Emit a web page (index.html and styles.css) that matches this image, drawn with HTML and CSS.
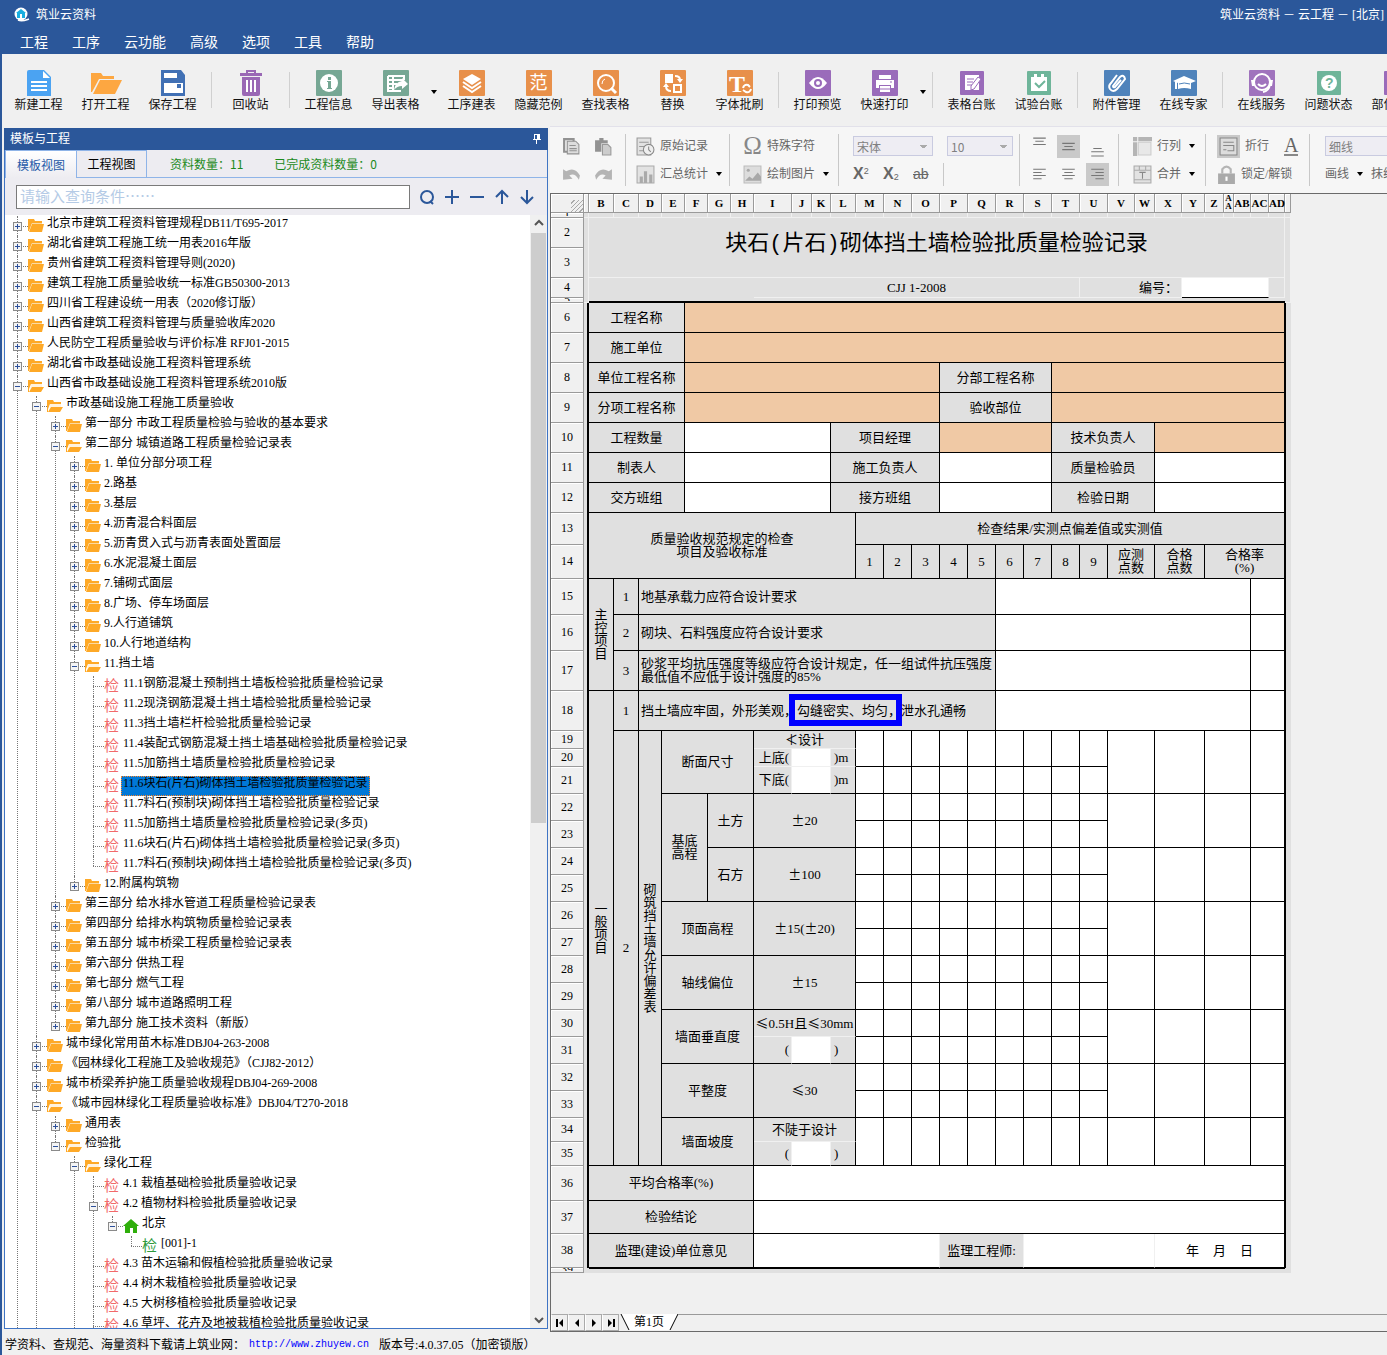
FILE: index.html
```html
<!DOCTYPE html>
<html lang="zh-CN">
<head>
    <meta charset="UTF-8">
    <meta name="viewport" content="width=device-width, initial-scale=1.0">
    <title>筑业云资料</title>
    <link rel="stylesheet" href="styles.css">
</head>
<body>
    <!-- Shared icons -->
    <svg class="defs">
        <symbol id="folder" viewBox="0 0 16 14">
            <path fill="#fea927" d="M0 0h6l1 2h7v2H4L1 12H0z"/>
            <path fill="#fcd9a0" d="M4 4h10v1H4z"/>
            <path fill="#fea927" d="M4 5h12l-2 8H1z"/>
        </symbol>
        <symbol id="folder-open" viewBox="0 0 16 14">
            <path fill="#fea927" d="M0 1h6l1 2h7v2H3L1 10v3H0z"/>
            <path fill="#fff3df" d="M3 5h11v3H4l-2 4z"/>
            <path fill="#fea927" d="M4 8h12l-3 5H1z"/>
        </symbol>
        <symbol id="home" viewBox="0 0 16 14">
            <path fill="#2fae0b" d="M8 0l8 7h-2v7h-4V9H7v5H2V7H0z"/>
        </symbol>
    </svg>

    <header class="titlebar">
        <div class="caption">
            <svg width="16" height="16" viewBox="0 0 16 16"><circle cx="7" cy="7" r="6.500" fill="#fff"/><path fill="#19aee0" d="M7 2l5 4h-1v5H3V6H2z"/><path fill="#fff" d="M6 7h2v4H6z"/><path fill="none" stroke="#fff" stroke-width="1.500" d="M4 13c4 2 8 0 11-1"/></svg>
            <span>筑业云资料</span>
            <span class="doc-title">筑业云资料 － 云工程 － [北京]</span>
        </div>
        <nav class="menu">
            <a href="#">工程</a>
            <a href="#">工序</a>
            <a href="#">云功能</a>
            <a href="#">高级</a>
            <a href="#">选项</a>
            <a href="#">工具</a>
            <a href="#">帮助</a>
        </nav>
    </header>

    <!-- Main toolbar -->
    <div class="toolbar">
        <button class="tool"><svg viewBox="0 0 26 26"><path fill="#4ba3f2" d="M3 0h15l7 7v19H1V2q0-2 2-2z"/><path fill="#fff" d="M17 1l7 7h-7z"/><path stroke="#fff" stroke-width="2" d="M5 12h16M5 16h16M5 20h16"/></svg>新建工程</button>
        <button class="tool"><svg class="wide" viewBox="0 0 32 26"><path fill="#fda741" d="M1 3h10l2 3h11v3H9L2 22H1z"/><path fill="#fda741" d="M10 10h22l-7 14H3z"/></svg>打开工程</button>
        <button class="tool"><svg viewBox="0 0 26 26"><path fill="#4170b4" d="M1 0h20l4 5v21H1z"/><path fill="#fff" d="M4 3h13v5H4zM4 13h19v10H4z"/><path fill="#4170b4" d="M17 14h4v4h-4z"/></svg>保存工程</button>
        <span class="split"></span>
        <button class="tool"><svg viewBox="0 0 26 26"><path fill="none" stroke="#9a68b5" stroke-width="2" d="M9 4V1h8v3"/><path fill="#9a68b5" d="M2 3h22v3H2zM4 7h18v17q0 2-2 2H6q-2 0-2-2z"/><path stroke="#fff" stroke-width="2" d="M9 10v12M13 10v12M17 10v12"/></svg>回收站</button>
        <span class="split"></span>
        <button class="tool"><svg viewBox="0 0 26 26"><rect width="26" height="26" rx="1" fill="#76a794"/><circle cx="13" cy="13" r="9" fill="#fff"/><path fill="#76a794" d="M12 7h3v3h-3zM11 11h4v7h1v1h-5v-1h1v-6h-1z"/></svg>工程信息</button>
        <button class="tool"><svg viewBox="0 0 26 26"><rect width="26" height="26" rx="1" fill="#76a794"/><path fill="none" stroke="#fff" stroke-width="2" d="M5 6h16v4M5 6v15h13M5 10h15M5 14h9M5 18h6M10 6v14"/><path fill="#fff" d="M19 8l6 6-6 5v-3q-5 0-8 4 1-8 8-9z"/></svg>导出表格</button>
        <button class="drop" aria-label="导出选项"></button>
        <button class="tool"><svg viewBox="0 0 26 26"><rect width="26" height="26" rx="1" fill="#e8904a"/><path fill="#fff" d="M13 4l9 5-9 6-9-6z"/><path fill="none" stroke="#fff" stroke-width="2" d="M4 12l9 6 9-6M4 16l9 6 9-6"/></svg>工序建表</button>
        <button class="tool"><span class="glyph">范</span>隐藏范例</button>
        <button class="tool"><svg viewBox="0 0 26 26"><rect width="26" height="26" rx="1" fill="#e8904a"/><circle cx="13" cy="13" r="8" fill="none" stroke="#fff" stroke-width="2"/><path fill="none" stroke="#fff" stroke-width="3" d="M18 18l5 5"/><path fill="none" stroke="#fff" d="M9 14q0-4 3-5"/></svg>查找表格</button>
        <button class="tool"><svg viewBox="0 0 26 26"><rect width="26" height="26" rx="1" fill="#e8904a"/><path fill="#fff" d="M5 4h8v9H5z"/><path fill="none" stroke="#fff" stroke-width="2" d="M14 15h7v7h-7zM15 6q5 0 5 4M6 16q0 5 5 5"/><path fill="#fff" d="M17 9h6l-3 4zM3 17l3-4 3 4z"/></svg>替换</button>
        <button class="tool"><svg viewBox="0 0 26 26"><rect width="26" height="26" rx="1" fill="#e8904a"/><text x="2" y="22" font-size="24" font-weight="bold" font-family="Liberation Serif" fill="#fff">T</text><path fill="none" stroke="#fff" stroke-width="2" d="M16 18q1-4 5-3l2 2M24 19q-1 4-5 3l-3-2"/></svg>字体批刷</button>
        <span class="split"></span>
        <button class="tool"><svg viewBox="0 0 26 26"><rect width="26" height="26" rx="1" fill="#9a6bba"/><path fill="#fff" d="M4 13q9-12 18 0-9 12-18 0z"/><circle cx="13" cy="13" r="3" fill="#fff" stroke="#9a6bba" stroke-width="2"/></svg>打印预览</button>
        <button class="tool"><svg viewBox="0 0 26 26"><rect width="26" height="26" rx="1" fill="#9a6bba"/><path fill="#fff" d="M7 5h12v4H7zM4 10h18v8h-3v-3H7v3H4zM8 16h10v6H8z"/><path stroke="#9a6bba" d="M8 19h10M18 12h2"/></svg>快速打印</button>
        <button class="drop" aria-label="打印选项"></button>
        <span class="split"></span>
        <button class="tool"><svg viewBox="0 0 26 26"><rect x="1" y="1" width="24" height="24" rx="1" fill="#9a6bba"/><path fill="#fff" d="M6 5h14v15H6z"/><path stroke="#9a6bba" d="M8 9h7M8 12h6M8 15h5"/><path fill="#fff" stroke="#9a6bba" d="M19 7l3 2-7 10-3 1v-4z"/></svg>表格台账</button>
        <button class="tool"><svg viewBox="0 0 26 26"><rect x="1" y="1" width="24" height="24" rx="1" fill="#6fb59a"/><path fill="#fff" d="M5 7h16v14H5zM8 4h3v5H8zM15 4h3v5h-3z"/><path fill="none" stroke="#6fb59a" stroke-width="2" d="M9 13l4 4 6-6"/></svg>试验台账</button>
        <span class="split"></span>
        <button class="tool"><svg viewBox="0 0 26 26"><rect width="26" height="26" rx="1" fill="#4f83bb"/><path fill="none" stroke="#fff" stroke-width="2" d="M17 10l-6 7q-2 1-2-1l7-9q4-3 5 2l-8 10q-4 4-7 0-2-3 1-6l6-8"/></svg>附件管理</button>
        <button class="tool"><svg viewBox="0 0 26 26"><rect width="26" height="26" rx="1" fill="#4f83bb"/><path fill="#fff" d="M13 6l12 5-5 2v6q-7-2-13 0v-6l-5-2z"/><path fill="none" stroke="#4f83bb" d="M8 14q5-2 11 0"/><path stroke="#fff" stroke-width="2" d="M5 12v7"/></svg>在线专家</button>
        <span class="split"></span>
        <button class="tool"><svg viewBox="0 0 26 26"><rect width="26" height="26" rx="1" fill="#a073bd"/><circle cx="13" cy="12" r="8" fill="none" stroke="#fff" stroke-width="2"/><path fill="none" stroke="#fff" stroke-width="2" d="M9 14q4 4 8 0M21 14q-1 7-7 8"/><path fill="#fff" d="M2 10h3v6H3zM21 10h3l-1 6h-2z"/></svg>在线服务</button>
        <button class="tool"><svg viewBox="0 0 26 26"><rect x="1" y="1" width="24" height="24" rx="1" fill="#6fb59a"/><circle cx="13" cy="13" r="8" fill="#fff"/><text x="9" y="18" font-size="14" font-weight="bold" font-family="Liberation Sans" fill="#6fb59a">?</text></svg>问题状态</button>
        <button class="tool"><svg viewBox="0 0 26 26"><rect x="1" y="1" width="24" height="24" rx="1" fill="#9a6bba"/><path fill="#fff" d="M5 5h14v15H5z"/></svg>部位管理</button>
    </div>

    <main class="workspace">
        <!-- Left: template tree -->
        <aside class="panel">
            <div class="panel-head">模板与工程
                <svg width="9" height="10" viewBox="0 0 9 10"><path fill="#fff" d="M2 0h6v5h1v1H5v4H4V6H1V5h1z"/><path fill="#2b579a" d="M3 1h2v4H3z"/></svg>
            </div>
            <div class="tabs">
                <button class="tab active">模板视图</button>
                <button class="tab">工程视图</button>
                <div class="counts"><span>资料数量：11</span><span>已完成资料数量：0</span></div>
            </div>
            <div class="search">
                <input type="text" aria-label="查询条件" placeholder="请输入查询条件……">
                <button aria-label="查找"><svg viewBox="0 0 16 16"><circle cx="8" cy="8" r="6"/><path d="M11 12l3 3"/></svg></button>
                <button aria-label="展开"><svg viewBox="0 0 16 16"><path d="M8 1v14M1 8h14"/></svg></button>
                <button aria-label="折叠"><svg viewBox="0 0 16 16"><path d="M1 8h14"/></svg></button>
                <button aria-label="上一个"><svg viewBox="0 0 16 16"><path d="M8 2v13M2 8l6-6 6 6"/></svg></button>
                <button aria-label="下一个"><svg viewBox="0 0 16 16"><path d="M8 1v13M2 8l6 6 6-6"/></svg></button>
            </div>
            <div class="tree-box">
                <ul class="tree more">
                    <li><div class="row"><button class="toggle"></button><svg><use href="#folder"/></svg><span>北京市建筑工程资料管理规程DB11/T695-2017</span></div></li>
                    <li><div class="row"><button class="toggle"></button><svg><use href="#folder"/></svg><span>湖北省建筑工程施工统一用表2016年版</span></div></li>
                    <li><div class="row"><button class="toggle"></button><svg><use href="#folder"/></svg><span>贵州省建筑工程资料管理导则(2020)</span></div></li>
                    <li><div class="row"><button class="toggle"></button><svg><use href="#folder"/></svg><span>建筑工程施工质量验收统一标准GB50300-2013</span></div></li>
                    <li><div class="row"><button class="toggle"></button><svg><use href="#folder"/></svg><span>四川省工程建设统一用表（2020修订版）</span></div></li>
                    <li><div class="row"><button class="toggle"></button><svg><use href="#folder"/></svg><span>山西省建筑工程资料管理与质量验收库2020</span></div></li>
                    <li><div class="row"><button class="toggle"></button><svg><use href="#folder"/></svg><span>人民防空工程质量验收与评价标准 RFJ01-2015</span></div></li>
                    <li><div class="row"><button class="toggle"></button><svg><use href="#folder"/></svg><span>湖北省市政基础设施工程资料管理系统</span></div></li>
                    <li><div class="row"><button class="toggle open"></button><svg><use href="#folder-open"/></svg><span>山西省市政基础设施工程资料管理系统2010版</span></div>
                        <ul class="more">
                            <li><div class="row"><button class="toggle open"></button><svg><use href="#folder-open"/></svg><span>市政基础设施工程施工质量验收</span></div>
                                <ul>
                                    <li><div class="row"><button class="toggle"></button><svg><use href="#folder"/></svg><span>第一部分 市政工程质量检验与验收的基本要求</span></div></li>
                                    <li><div class="row"><button class="toggle open"></button><svg><use href="#folder-open"/></svg><span>第二部分 城镇道路工程质量检验记录表</span></div>
                                        <ul>
                                            <li><div class="row"><button class="toggle"></button><svg><use href="#folder"/></svg><span>1. 单位分部分项工程</span></div></li>
                                            <li><div class="row"><button class="toggle"></button><svg><use href="#folder"/></svg><span>2.路基</span></div></li>
                                            <li><div class="row"><button class="toggle"></button><svg><use href="#folder"/></svg><span>3.基层</span></div></li>
                                            <li><div class="row"><button class="toggle"></button><svg><use href="#folder"/></svg><span>4.沥青混合料面层</span></div></li>
                                            <li><div class="row"><button class="toggle"></button><svg><use href="#folder"/></svg><span>5.沥青贯入式与沥青表面处置面层</span></div></li>
                                            <li><div class="row"><button class="toggle"></button><svg><use href="#folder"/></svg><span>6.水泥混凝土面层</span></div></li>
                                            <li><div class="row"><button class="toggle"></button><svg><use href="#folder"/></svg><span>7.铺砌式面层</span></div></li>
                                            <li><div class="row"><button class="toggle"></button><svg><use href="#folder"/></svg><span>8.广场、停车场面层</span></div></li>
                                            <li><div class="row"><button class="toggle"></button><svg><use href="#folder"/></svg><span>9.人行道铺筑</span></div></li>
                                            <li><div class="row"><button class="toggle"></button><svg><use href="#folder"/></svg><span>10.人行地道结构</span></div></li>
                                            <li><div class="row"><button class="toggle open"></button><svg><use href="#folder-open"/></svg><span>11.挡土墙</span></div>
                                                <ul>
                                                    <li><div class="row leaf"><i>检</i><span>11.1钢筋混凝土预制挡土墙板检验批质量检验记录</span></div></li>
                                                    <li><div class="row leaf"><i>检</i><span>11.2现浇钢筋混凝土挡土墙检验批质量检验记录</span></div></li>
                                                    <li><div class="row leaf"><i>检</i><span>11.3挡土墙栏杆检验批质量检验记录</span></div></li>
                                                    <li><div class="row leaf"><i>检</i><span>11.4装配式钢筋混凝土挡土墙基础检验批质量检验记录</span></div></li>
                                                    <li><div class="row leaf"><i>检</i><span>11.5加筋挡土墙质量检验批质量检验记录</span></div></li>
                                                    <li><div class="row leaf"><i>检</i><span class="selected">11.6块石(片石)砌体挡土墙检验批质量检验记录</span></div></li>
                                                    <li><div class="row leaf"><i>检</i><span>11.7料石(预制块)砌体挡土墙检验批质量检验记录</span></div></li>
                                                    <li><div class="row leaf"><i>检</i><span>11.5加筋挡土墙质量检验批质量检验记录(多页)</span></div></li>
                                                    <li><div class="row leaf"><i>检</i><span>11.6块石(片石)砌体挡土墙检验批质量检验记录(多页)</span></div></li>
                                                    <li><div class="row leaf"><i>检</i><span>11.7料石(预制块)砌体挡土墙检验批质量检验记录(多页)</span></div></li>
                                                </ul>
                                            </li>
                                            <li><div class="row"><button class="toggle"></button><svg><use href="#folder"/></svg><span>12.附属构筑物</span></div></li>
                                        </ul>
                                    </li>
                                    <li><div class="row"><button class="toggle"></button><svg><use href="#folder"/></svg><span>第三部分 给水排水管道工程质量检验记录表</span></div></li>
                                    <li><div class="row"><button class="toggle"></button><svg><use href="#folder"/></svg><span>第四部分 给排水构筑物质量检验记录表</span></div></li>
                                    <li><div class="row"><button class="toggle"></button><svg><use href="#folder"/></svg><span>第五部分 城市桥梁工程质量检验记录表</span></div></li>
                                    <li><div class="row"><button class="toggle"></button><svg><use href="#folder"/></svg><span>第六部分 供热工程</span></div></li>
                                    <li><div class="row"><button class="toggle"></button><svg><use href="#folder"/></svg><span>第七部分 燃气工程</span></div></li>
                                    <li><div class="row"><button class="toggle"></button><svg><use href="#folder"/></svg><span>第八部分 城市道路照明工程</span></div></li>
                                    <li><div class="row"><button class="toggle"></button><svg><use href="#folder"/></svg><span>第九部分 施工技术资料（新版）</span></div></li>
                                </ul>
                            </li>
                            <li><div class="row"><button class="toggle"></button><svg><use href="#folder"/></svg><span>城市绿化常用苗木标准DBJ04-263-2008</span></div></li>
                            <li><div class="row"><button class="toggle"></button><svg><use href="#folder"/></svg><span>《园林绿化工程施工及验收规范》（CJJ82-2012）</span></div></li>
                            <li><div class="row"><button class="toggle"></button><svg><use href="#folder"/></svg><span>城市桥梁养护施工质量验收规程DBJ04-269-2008</span></div></li>
                            <li><div class="row"><button class="toggle open"></button><svg><use href="#folder-open"/></svg><span>《城市园林绿化工程质量验收标准》DBJ04/T270-2018</span></div>
                                <ul>
                                    <li><div class="row"><button class="toggle"></button><svg><use href="#folder"/></svg><span>通用表</span></div></li>
                                    <li><div class="row"><button class="toggle open"></button><svg><use href="#folder-open"/></svg><span>检验批</span></div>
                                        <ul class="more">
                                            <li><div class="row"><button class="toggle open"></button><svg><use href="#folder-open"/></svg><span>绿化工程</span></div>
                                                <ul class="more">
                                                    <li><div class="row leaf"><i>检</i><span>4.1 栽植基础检验批质量验收记录</span></div></li>
                                                    <li><div class="row"><button class="toggle open"></button><i>检</i><span>4.2 植物材料检验批质量验收记录</span></div>
                                                        <ul>
                                                            <li><div class="row"><button class="toggle open"></button><svg><use href="#home"/></svg><span>北京</span></div>
                                                                <ul>
                                                                    <li><div class="row leaf"><i class="done">检</i><span>[001]-1</span></div></li>
                                                                </ul>
                                                            </li>
                                                        </ul>
                                                    </li>
                                                    <li><div class="row leaf"><i>检</i><span>4.3 苗木运输和假植检验批质量验收记录</span></div></li>
                                                    <li><div class="row leaf"><i>检</i><span>4.4 树木栽植检验批质量验收记录</span></div></li>
                                                    <li><div class="row leaf"><i>检</i><span>4.5 大树移植检验批质量验收记录</span></div></li>
                                                    <li><div class="row leaf"><i>检</i><span>4.6 草坪、花卉及地被栽植检验批质量验收记录</span></div></li>
                                                </ul>
                                            </li>
                                        </ul>
                                    </li>
                                </ul>
                            </li>
                        </ul>
                    </li>
                </ul>
                <div class="scrollbar">
                    <svg viewBox="0 0 17 17"><path d="M5 10l4-4 4 4"/></svg>
                    <div class="thumb"></div>
                    <svg viewBox="0 0 17 17"><path d="M5 7l4 4 4-4"/></svg>
                </div>
            </div>
        </aside>

        <!-- Right: form editor -->
        <section class="editor">
            <div class="format-bar">
                <div class="group clip">
                    <div class="line"><button aria-label="复制"><svg viewBox="0 0 18 18"><path fill="#eee" stroke="#929292" stroke-width="2" d="M2 2h9v12H2z"/><path fill="#ddd" stroke="#929292" d="M5 4h8l3 3v9H5z"/><path stroke="#929292" d="M7 8h6M7 11h7M7 13h7"/></svg></button><button aria-label="粘贴"><svg viewBox="0 0 18 18"><path fill="#929292" d="M1 3h4V1h4v2h4v3H7v8H1z"/><path fill="#ccc" stroke="#999" d="M8 7h5l3 3v7H8z"/></svg></button></div>
                    <div class="line"><button aria-label="撤销"><svg viewBox="0 0 18 18"><path fill="#b4b4b4" d="M1 4l3 2q8-5 13 4l-1 4q-4-7-9-4l3 3-9 1z"/></svg></button><button aria-label="重做"><svg viewBox="0 0 18 18"><path fill="#b4b4b4" d="M17 4l-3 2q-8-5-13 4l1 4q4-7 9-4l-3 3 9 1z"/></svg></button></div>
                </div>
                <div class="group record">
                    <div class="line"><button><svg viewBox="0 0 18 18"><path fill="#e2e2e2" stroke="#999" d="M1 1h13v16H1z"/><path stroke="#999" d="M3 5h9M3 9h5M3 13h4"/><circle cx="12" cy="12" r="5" fill="#eee" stroke="#888"/><path fill="none" stroke="#888" d="M12 9v3l2 2"/></svg>原始记录</button></div>
                    <div class="line"><button><svg viewBox="0 0 18 18"><path fill="#e2e2e2" stroke="#aaa" d="M1 1h16v16H1z"/><path stroke="#aaa" stroke-width="3" d="M5 17v-6M9 17V6M14 17v-8"/></svg>汇总统计<b class="caret"></b></button></div>
                </div>
                <div class="group symbol">
                    <div class="line"><button><span class="omega">Ω</span>特殊字符</button></div>
                    <div class="line"><button><svg viewBox="0 0 18 18"><path fill="#ddd" stroke="#bbb" d="M1 1h16v16H1z"/><circle cx="5" cy="5" r="1.500" fill="#aaa"/><path fill="#a8a8a8" d="M2 15l4-4 3 2 5-6 3 4v4z"/></svg>绘制图片<b class="caret"></b></button></div>
                </div>
                <div class="group font">
                    <div class="line"><select class="face" aria-label="字体"><option>宋体</option></select><select class="size" aria-label="字号"><option>10</option></select></div>
                    <div class="line"><button class="script"><b>X</b><sup>2</sup></button><button class="script"><b>X</b><sub>2</sub></button><button class="strike">ab</button><span class="bar"></span></div>
                </div>
                <div class="group align">
                    <div class="line"><button aria-label="顶端"><svg viewBox="0 0 22 22"><path d="M5 3h12M7 6h8M5 9h12"/></svg></button><button class="on" aria-label="居中"><svg viewBox="0 0 22 22"><path d="M5 8h12M7 11h8M5 14h12"/></svg></button><button aria-label="底端"><svg viewBox="0 0 22 22"><path d="M7 13h8M5 16h12M5 20h12"/></svg></button></div>
                    <div class="line"><button aria-label="左对齐"><svg viewBox="0 0 22 22"><path d="M5 6h12M5 9h8M5 12h12M5 15h8"/></svg></button><button aria-label="水平居中"><svg viewBox="0 0 22 22"><path d="M5 6h12M7 9h8M5 12h12M7 15h8"/></svg></button><button class="on" aria-label="右对齐"><svg viewBox="0 0 22 22"><path d="M5 6h12M9 9h8M5 12h12M9 15h8"/></svg></button></div>
                </div>
                <div class="group cells">
                    <div class="line"><button><svg viewBox="0 0 18 18"><path fill="#b5b5b5" d="M0 0h4v4H0zM5 0h13v4H5zM0 5h4v13H0z"/><path fill="#e8e8e8" stroke="#ccc" d="M5 5h12v12H5z"/></svg>行列<b class="caret"></b></button></div>
                    <div class="line"><button><svg viewBox="0 0 18 18"><path fill="#e2e2e2" stroke="#aaa" d="M1 1h16v16H1z"/><path stroke="#aaa" d="M1 5h16M1 14h16M6 1v4M12 1v4"/><path stroke="#888" d="M6 7h6M9 7v6"/></svg>合并<b class="caret"></b></button></div>
                </div>
                <div class="group wrap">
                    <div class="line"><button><span class="on"><svg viewBox="0 0 18 18"><path fill="#ddd" stroke="#888" d="M1 1h16v16H1z"/><path fill="none" stroke="#888" d="M4 5h10M4 8h10v5H8M4 12h3"/></svg></span>折行</button><button class="letter">A</button></div>
                    <div class="line"><button><svg viewBox="0 0 18 18"><path fill="none" stroke="#b5b5b5" stroke-width="2" d="M5 8V4q4-5 8 0v4"/><path fill="#aaa" d="M1 8h16v10H1z"/><path stroke="#fff" stroke-width="2" d="M9 11v4"/></svg>锁定/解锁</button></div>
                </div>
                <div class="group pen">
                    <div class="line"><select class="face" aria-label="线型"><option>细线</option></select></div>
                    <div class="line"><button>画线<b class="caret"></b></button><button>抹线</button></div>
                </div>
            </div>

            <div class="sheet">
                <table>
                    <colgroup>
                        <col class="w33"><col class="w5"><col class="w25"><col class="w25"><col class="w23"><col class="w23"><col class="w23"><col class="w23"><col class="w23"><col class="w38"><col class="w20"><col class="w19"><col class="w25">
                        <col class="w28" span="9"><col class="w27"><col class="w20"><col class="w27"><col class="w23"><col class="w19"><col class="w10"><col class="w17"><col class="w18"><col class="w16"><col class="w6">
                    </colgroup>
                    <thead>
                        <tr class="h19"><th class="corner"></th><th></th><th>B</th><th>C</th><th>D</th><th>E</th><th>F</th><th>G</th><th>H</th><th>I</th><th>J</th><th>K</th><th>L</th><th>M</th><th>N</th><th>O</th><th>P</th><th>Q</th><th>R</th><th>S</th><th>T</th><th>U</th><th>V</th><th>W</th><th>X</th><th>Y</th><th>Z</th><th><div class="cut">A A</div></th><th>AB</th><th>AC</th><th>AD</th><th></th></tr>
                    </thead>
                    <tbody>
                        <tr class="h5 faint"><th><div class="sliver">1</div></th><td></td><td></td><td></td><td></td><td></td><td></td><td></td><td></td><td></td><td></td><td></td><td></td><td></td><td></td><td></td><td></td><td></td><td></td><td></td><td></td><td></td><td></td><td></td><td></td><td></td><td></td><td></td><td></td><td></td><td></td><td></td></tr>
                        <tr class="h30 faint"><th>2</th><td rowspan="4"></td><td class="title" colspan="29" rowspan="2">块石(片石)砌体挡土墙检验批质量检验记录</td><td rowspan="4"></td></tr>
                        <tr class="h30"><th>3</th></tr>
                        <tr class="h20 faint"><th>4</th><td class="open" colspan="7"></td><td colspan="12">CJJ 1-2008</td><td class="number" colspan="4">编号：</td><td class="white under" colspan="5"></td><td></td></tr>
                        <tr class="h5"><th><div class="sliver">5</div></th><td class="top" colspan="29"></td></tr>

                        <tr class="h30"><th>6</th><td class="gutter left" rowspan="33"></td><td colspan="4">工程名称</td><td class="fill" colspan="25"></td><td class="gutter right" rowspan="33"></td></tr>
                        <tr class="h30"><th>7</th><td colspan="4">施工单位</td><td class="fill" colspan="25"></td></tr>
                        <tr class="h30"><th>8</th><td colspan="4">单位工程名称</td><td class="fill" colspan="10"></td><td colspan="4">分部工程名称</td><td class="fill" colspan="11"></td></tr>
                        <tr class="h30"><th>9</th><td colspan="4">分项工程名称</td><td class="fill" colspan="10"></td><td colspan="4">验收部位</td><td class="fill" colspan="11"></td></tr>
                        <tr class="h30"><th>10</th><td colspan="4">工程数量</td><td class="white" colspan="6"></td><td colspan="4">项目经理</td><td class="fill" colspan="4"></td><td colspan="4">技术负责人</td><td class="fill" colspan="7"></td></tr>
                        <tr class="h30"><th>11</th><td colspan="4">制表人</td><td class="white" colspan="6"></td><td colspan="4">施工负责人</td><td class="white" colspan="4"></td><td colspan="4">质量检验员</td><td class="white" colspan="7"></td></tr>
                        <tr class="h30"><th>12</th><td colspan="4">交方班组</td><td class="white" colspan="6"></td><td colspan="4">接方班组</td><td class="white" colspan="4"></td><td colspan="4">检验日期</td><td class="white" colspan="7"></td></tr>

                        <tr class="h32"><th>13</th><td colspan="11" rowspan="2">质量验收规范规定的检查<br>项目及验收标准</td><td colspan="18">检查结果/实测点偏差值或实测值</td></tr>
                        <tr class="h34"><th>14</th><td>1</td><td>2</td><td>3</td><td>4</td><td>5</td><td>6</td><td>7</td><td>8</td><td>9</td><td colspan="2">应测<br>点数</td><td colspan="2">合格<br>点数</td><td colspan="5">合格率<br>(%)</td></tr>

                        <tr class="h36"><th>15</th><td rowspan="3">主<br>控<br>项<br>目</td><td>1</td><td class="text" colspan="14">地基承载力应符合设计要求</td><td class="white" colspan="11"></td><td class="white" colspan="2"></td></tr>
                        <tr class="h36"><th>16</th><td>2</td><td class="text" colspan="14">砌块、石料强度应符合设计要求</td><td class="white" colspan="11"></td><td class="white" colspan="2"></td></tr>
                        <tr class="h40"><th>17</th><td>3</td><td class="text" colspan="14">砂浆平均抗压强度等级应符合设计规定，任一组试件抗压强度<br>最低值不应低于设计强度的85%</td><td class="white" colspan="11"></td><td class="white" colspan="2"></td></tr>
                        <tr class="h40"><th>18</th><td rowspan="18">一<br>般<br>项<br>目</td><td>1</td><td class="text" colspan="14">挡土墙应牢固，外形美观，<span class="mark">勾缝密实、均匀，</span>泄水孔通畅</td><td class="white" colspan="11"></td><td class="white" colspan="2"></td></tr>

                        <tr class="h18 grid"><th>19</th><td class="label" rowspan="17">2</td><td class="label" rowspan="17">砌<br>筑<br>挡<br>土<br>墙<br>允<br>许<br>偏<br>差<br>表</td><td class="label" colspan="4" rowspan="3">断面尺寸</td><td class="label soft" colspan="4"><span class="sign">≮</span>设计</td><td rowspan="2"></td><td rowspan="2"></td><td rowspan="2"></td><td rowspan="2"></td><td rowspan="2"></td><td rowspan="2"></td><td rowspan="2"></td><td rowspan="2"></td><td rowspan="2"></td><td colspan="2" rowspan="3"></td><td colspan="2" rowspan="3"></td><td colspan="3" rowspan="3"></td><td colspan="2" rowspan="3"></td></tr>
                        <tr class="h18 grid"><th>20</th><td class="label soft tail">上底(</td><td class="soft blank" colspan="2"></td><td class="label soft head">)m</td></tr>
                        <tr class="h27 grid"><th>21</th><td class="label tail">下底(</td><td class="blank" colspan="2"></td><td class="label head">)m</td><td></td><td></td><td></td><td></td><td></td><td></td><td></td><td></td><td></td></tr>
                        <tr class="h27 grid"><th>22</th><td class="label" colspan="2" rowspan="4">基底<br>高程</td><td class="label" colspan="2" rowspan="2">土方</td><td class="label" colspan="4" rowspan="2"><span class="sign">±</span>20</td><td></td><td></td><td></td><td></td><td></td><td></td><td></td><td></td><td></td><td colspan="2" rowspan="2"></td><td colspan="2" rowspan="2"></td><td colspan="3" rowspan="2"></td><td colspan="2" rowspan="2"></td></tr>
                        <tr class="h27 grid"><th>23</th><td></td><td></td><td></td><td></td><td></td><td></td><td></td><td></td><td></td></tr>
                        <tr class="h27 grid"><th>24</th><td class="label" colspan="2" rowspan="2">石方</td><td class="label" colspan="4" rowspan="2"><span class="sign">±</span>100</td><td></td><td></td><td></td><td></td><td></td><td></td><td></td><td></td><td></td><td colspan="2" rowspan="2"></td><td colspan="2" rowspan="2"></td><td colspan="3" rowspan="2"></td><td colspan="2" rowspan="2"></td></tr>
                        <tr class="h27 grid"><th>25</th><td></td><td></td><td></td><td></td><td></td><td></td><td></td><td></td><td></td></tr>
                        <tr class="h27 grid"><th>26</th><td class="label" colspan="4" rowspan="2">顶面高程</td><td class="label" colspan="4" rowspan="2"><span class="sign">±</span>15(<span class="sign">±</span>20)</td><td></td><td></td><td></td><td></td><td></td><td></td><td></td><td></td><td></td><td colspan="2" rowspan="2"></td><td colspan="2" rowspan="2"></td><td colspan="3" rowspan="2"></td><td colspan="2" rowspan="2"></td></tr>
                        <tr class="h27 grid"><th>27</th><td></td><td></td><td></td><td></td><td></td><td></td><td></td><td></td><td></td></tr>
                        <tr class="h27 grid"><th>28</th><td class="label" colspan="4" rowspan="2">轴线偏位</td><td class="label" colspan="4" rowspan="2"><span class="sign">±</span>15</td><td></td><td></td><td></td><td></td><td></td><td></td><td></td><td></td><td></td><td colspan="2" rowspan="2"></td><td colspan="2" rowspan="2"></td><td colspan="3" rowspan="2"></td><td colspan="2" rowspan="2"></td></tr>
                        <tr class="h27 grid"><th>29</th><td></td><td></td><td></td><td></td><td></td><td></td><td></td><td></td><td></td></tr>
                        <tr class="h27 grid"><th>30</th><td class="label" colspan="4" rowspan="2">墙面垂直度</td><td class="label soft" colspan="4"><span class="sign">≤</span>0.5H且<span class="sign">≤</span>30mm</td><td></td><td></td><td></td><td></td><td></td><td></td><td></td><td></td><td></td><td colspan="2" rowspan="2"></td><td colspan="2" rowspan="2"></td><td colspan="3" rowspan="2"></td><td colspan="2" rowspan="2"></td></tr>
                        <tr class="h27 grid"><th>31</th><td class="label tail">(</td><td class="blank" colspan="2"></td><td class="label head">)</td><td></td><td></td><td></td><td></td><td></td><td></td><td></td><td></td><td></td></tr>
                        <tr class="h27 grid"><th>32</th><td class="label" colspan="4" rowspan="2">平整度</td><td class="label" colspan="4" rowspan="2"><span class="sign">≤</span>30</td><td></td><td></td><td></td><td></td><td></td><td></td><td></td><td></td><td></td><td colspan="2" rowspan="2"></td><td colspan="2" rowspan="2"></td><td colspan="3" rowspan="2"></td><td colspan="2" rowspan="2"></td></tr>
                        <tr class="h27 grid"><th>33</th><td></td><td></td><td></td><td></td><td></td><td></td><td></td><td></td><td></td></tr>
                        <tr class="h24 grid"><th>34</th><td class="label" colspan="4" rowspan="2">墙面坡度</td><td class="label soft" colspan="4">不陡于设计</td><td rowspan="2"></td><td rowspan="2"></td><td rowspan="2"></td><td rowspan="2"></td><td rowspan="2"></td><td rowspan="2"></td><td rowspan="2"></td><td rowspan="2"></td><td rowspan="2"></td><td colspan="2" rowspan="2"></td><td colspan="2" rowspan="2"></td><td colspan="3" rowspan="2"></td><td colspan="2" rowspan="2"></td></tr>
                        <tr class="h24 grid"><th>35</th><td class="label tail">(</td><td class="blank" colspan="2"></td><td class="label head">)</td></tr>

                        <tr class="h35"><th>36</th><td colspan="7">平均合格率(%)</td><td class="white" colspan="22"></td></tr>
                        <tr class="h33"><th>37</th><td colspan="7">检验结论</td><td class="white" colspan="22"></td></tr>
                        <tr class="h34"><th>38</th><td colspan="7">监理(建设)单位意见</td><td class="white pale" colspan="7"></td><td class="pale" colspan="3">监理工程师:</td><td class="white pale" colspan="5"></td><td class="white date" colspan="7"><span>年</span><span>月</span><span>日</span></td></tr>
                        <tr class="h5"><th><div class="sliver">39</div></th><td class="open"></td><td class="bottom" colspan="29"></td><td class="open"></td></tr>
                    </tbody>
                </table>
            </div>

            <div class="sheet-tabs">
                <button aria-label="首页"><svg viewBox="0 0 8 8"><path d="M0 0h2v8H0zM7 0v8L3 4z"/></svg></button>
                <button aria-label="上一页"><svg viewBox="0 0 8 8"><path d="M6 0v8L2 4z"/></svg></button>
                <button aria-label="下一页"><svg viewBox="0 0 8 8"><path d="M2 0v8l4-4z"/></svg></button>
                <button aria-label="末页"><svg viewBox="0 0 8 8"><path d="M6 0h2v8H6zM1 0v8l4-4z"/></svg></button>
                <a class="page" href="#"><svg viewBox="0 0 58 17"><path fill="#fff" d="M1 0h57l-8 16H9z"/><path fill="none" stroke="#000" d="M1 0l8 16M50 16l8-16"/></svg><span>第1页</span></a>
                <span class="rest"></span>
            </div>
        </section>
    </main>

    <footer class="status">
        <span>学资料、查规范、海量资料下载请上筑业网：</span>
        <a href="#">http://www.zhuyew.cn</a>
        <span>版本号:4.0.37.05（加密锁版）</span>
    </footer>
</body>
</html>
```
FILE: styles.css
```css
* {
    box-sizing: border-box;
}

body {
    margin: 0;
    height: 100vh;
    display: flex;
    flex-direction: column;
    overflow: hidden;
    border-left: 2px solid #2b579a;
    background: #f0f0f0;
    color: #000;
    font-family: "Liberation Serif", "Noto Sans CJK SC", serif;
    font-size: 12px;
    line-height: 14px;
}

button {
    margin: 0;
    padding: 0;
    border: none;
    background: none;
    color: inherit;
    font: inherit;
    white-space: nowrap;
}

a {
    color: inherit;
    text-decoration: none;
}

.defs {
    display: none;
}

/* Title bar */
.titlebar {
    flex: none;
    height: 54px;
    background: #2b579a;
    color: #fff;
}

.caption {
    display: flex;
    align-items: center;
    gap: 6px;
    height: 30px;
    padding-left: 12px;
}

.doc-title {
    width: 167px;
    margin-left: auto;
    overflow: hidden;
    white-space: nowrap;
}

.menu {
    display: flex;
    gap: 24px;
    padding-left: 18px;
    font-size: 14px;
    line-height: 26px;
}

/* Main toolbar */
.toolbar {
    flex: none;
    display: flex;
    height: 72px;
    padding: 16px 0 0 3px;
    overflow: hidden;
    color: #111;
}

.tool {
    flex: none;
    display: flex;
    flex-direction: column;
    align-items: center;
    gap: 2px;
    width: 67px;
    height: 42px;
}

.tool svg {
    width: 26px;
    height: 26px;
    overflow: visible;
}

.tool svg.wide {
    width: 32px;
}

.glyph {
    width: 26px;
    height: 26px;
    border-radius: 1px;
    background: #e8904a;
    color: #fff;
    font-size: 18px;
    line-height: 26px;
}

.split {
    flex: none;
    width: 1px;
    height: 36px;
    margin: 2px 5px 0;
    background: #d0d0d0;
}

.drop {
    flex: none;
    width: 9px;
    height: 40px;
}

.drop::before,
.caret {
    content: "";
    display: inline-block;
    border: 3px solid transparent;
    border-top: 4px solid #000;
    border-bottom: none;
}

/* Workspace */
.workspace {
    flex: 1;
    display: flex;
    min-height: 0;
    gap: 2px;
    padding-left: 2px;
}

.panel {
    flex: none;
    display: flex;
    flex-direction: column;
    width: 544px;
    margin: 2px 0 3px;
    border: 1px solid #3f74c4;
    background: #edecf1;
}

.panel-head {
    display: flex;
    align-items: center;
    justify-content: space-between;
    height: 22px;
    margin: -1px -1px 0;
    padding: 0 7px 0 6px;
    background: #2b579a;
    color: #fff;
}

.tabs {
    display: flex;
    height: 28px;
    border-bottom: 1px solid #8fb4e8;
}

.tab {
    width: 71px;
    height: 28px;
    border: 1px solid #8fb4e8;
}

.tab.active {
    border-right: none;
    border-bottom: none;
    background: linear-gradient(#fff, #edecf1);
    color: #1f5aa8;
}

.counts {
    display: flex;
    align-items: center;
    gap: 31px;
    padding-left: 23px;
    color: #1b8a1b;
}

.counts,
.tab {
    font-family: "Noto Sans CJK SC", sans-serif;
}

.search {
    display: flex;
    align-items: center;
    gap: 9px;
    height: 37px;
    padding-left: 11px;
}

.search input {
    width: 394px;
    height: 24px;
    padding: 0 3px 2px;
    border: 1px solid #7a7a7a;
    background: #fff;
    font-family: "Noto Sans CJK SC", sans-serif;
    font-size: 15px;
}

.search input::placeholder {
    color: #b5cbe6;
}

.search svg {
    display: block;
    width: 16px;
    height: 16px;
    fill: none;
    stroke: #2b579a;
    stroke-width: 2;
}

/* Tree */
.tree-box {
    flex: 1;
    display: flex;
    min-height: 0;
    background: #fff;
}

.tree,
.tree ul {
    margin: 0;
    padding: 0;
    list-style: none;
}

.tree {
    flex: 1;
    padding: 1px 0 0 8px;
    overflow: hidden;
}

.tree ul {
    padding-left: 19px;
}

.tree li {
    position: relative;
}

.tree li::before {
    content: "";
    position: absolute;
    left: 4px;
    top: 0;
    bottom: 0;
    border-left: 1px dotted #777;
}

.tree li:last-child::before {
    height: 10px;
}

.tree.more > li:last-child::before,
.tree ul.more > li:last-child::before {
    height: auto;
}

.row {
    position: relative;
    display: flex;
    align-items: center;
    height: 20px;
    white-space: nowrap;
}

.row::after {
    content: "";
    position: absolute;
    left: 4px;
    top: 10px;
    width: 11px;
    border-top: 1px dotted #777;
}

.toggle {
    position: relative;
    z-index: 1;
    flex: none;
    width: 9px;
    height: 9px;
    margin-right: 6px;
    border: 1px solid #8a8a8a;
    background:
        linear-gradient(#2b4f9a, #2b4f9a) center / 5px 1px no-repeat,
        linear-gradient(#2b4f9a, #2b4f9a) center / 1px 5px no-repeat,
        #f4f4f4;
}

.toggle.open {
    background:
        linear-gradient(#2b4f9a, #2b4f9a) center / 5px 1px no-repeat,
        #f4f4f4;
}

.row svg {
    flex: none;
    width: 16px;
    height: 14px;
    margin-right: 1px;
}

.row.leaf {
    padding-left: 15px;
}

.row i {
    flex: none;
    width: 16px;
    margin-right: 1px;
    color: #f26a6a;
    font-size: 15px;
    font-style: normal;
    line-height: 18px;
}

.row i.done {
    color: #2e9a3c;
}

.row span {
    align-self: flex-start;
    padding: 0 2px;
    line-height: 15px;
}

.row .selected {
    height: 20px;
    background: #0078d7;
    outline: 1px dotted #ff8728;
    outline-offset: -1px;
}

.scrollbar {
    display: flex;
    flex-direction: column;
    width: 17px;
    background: #f0f0f0;
}

.scrollbar svg {
    flex: none;
    width: 17px;
    height: 17px;
    fill: none;
    stroke: #555;
    stroke-width: 2;
}

.thumb {
    height: 53%;
    margin: 1px 1px auto;
    background: #cdcdcd;
}

/* Editor */
.editor {
    flex: 1;
    display: flex;
    flex-direction: column;
    min-width: 0;
}

.format-bar {
    flex: none;
    display: flex;
    height: 67px;
    padding-top: 7px;
    border-top: 1px solid #e2e1ea;
    background: #f6f6f6;
    color: #666;
    overflow: hidden;
}

.group {
    flex: none;
    display: flex;
    flex-direction: column;
    justify-content: space-between;
    height: 52px;
    padding-left: 10px;
    border-right: 1px solid #c8c8c8;
}

.line {
    display: flex;
    align-items: center;
    height: 24px;
}

.group button {
    display: flex;
    align-items: center;
    gap: 5px;
}

.group svg {
    width: 19px;
    height: 19px;
}

.clip {
    width: 76px;
    padding-left: 12px;
}

.clip .line {
    gap: 13px;
}

.record {
    width: 104px;
}

.symbol {
    width: 109px;
    padding-left: 13px;
}

.caret {
    margin-left: 3px;
}

.omega {
    width: 19px;
    color: #888;
    font-size: 25px;
    line-height: 24px;
}

.font {
    width: 181px;
    padding-left: 14px;
}

.font .line {
    gap: 14px;
}

select {
    height: 20px;
    padding: 0 3px;
    border: 1px solid #c9cbe0;
    border-radius: 0;
    appearance: none;
    background:
        linear-gradient(#aaa, #aaa) right 5px top 8px / 7px 1px no-repeat,
        linear-gradient(#aaa, #aaa) right 6px top 9px / 5px 1px no-repeat,
        linear-gradient(#aaa, #aaa) right 7px top 10px / 3px 1px no-repeat,
        #eeedf3;
    color: #808080;
    font-family: "Noto Sans CJK SC", sans-serif;
    font-size: 12px;
}

.face {
    width: 80px;
}

.size {
    width: 66px;
}

.script {
    width: 16px;
    font-family: "Liberation Sans", sans-serif;
    font-size: 16px;
}

.group .script {
    gap: 0;
}

.script sup,
.script sub {
    align-self: flex-start;
    font-size: 9px;
    line-height: 8px;
}

.script sub {
    align-self: flex-end;
}

.strike {
    font-family: "Liberation Sans", sans-serif;
    font-size: 14px;
    text-decoration: line-through;
}

.bar {
    width: 1px;
    height: 23px;
    background: #c8c8c8;
}

.align {
    width: 99px;
    padding-left: 8px;
}

.align .line {
    gap: 6px;
}

.on {
    display: flex;
    background: #c9c9c9;
}

.align svg {
    width: 23px;
    height: 23px;
    fill: none;
    stroke: #777;
}

.cells {
    width: 87px;
    padding-left: 14px;
}

.wrap {
    width: 104px;
    padding-left: 11px;
}

.wrap .on {
    padding: 2px;
}

.wrap .line {
    gap: 15px;
}

.letter {
    border-bottom: 2px solid #888;
    font-size: 20px;
    line-height: 18px;
}

.pen {
    flex: 1;
    padding-left: 15px;
    border-right: none;
}

.pen .line {
    gap: 8px;
}

/* Form sheet */
.sheet {
    flex: 1;
    min-height: 0;
    overflow: hidden;
    border-top: 1px solid #6a6a6a;
    border-left: 1px solid #6a6a6a;
}

table {
    width: 740px;
    table-layout: fixed;
    border-collapse: separate;
    border-spacing: 0;
    font-size: 13px;
    line-height: 13px;
}

th {
    padding: 0 0 1px;
    border-right: 1px solid #9a9a9a;
    border-bottom: 1px solid #9a9a9a;
    background: #f0f0f0;
    box-shadow: inset 1px 1px #fff;
    font-size: 12px;
    font-weight: normal;
    line-height: 12px;
}

thead th {
    font-size: 11px;
    font-weight: bold;
}

.corner {
    background: repeating-linear-gradient(135deg, #f0f0f0 0 2px, #aaa 2px 3px) right bottom / 12px 12px no-repeat, #f0f0f0;
    clip-path: none;
}

.cut {
    height: 17px;
    overflow: hidden;
    font-size: 9px;
    line-height: 8px;
}

.sliver {
    height: 3px;
    overflow: hidden;
    line-height: 3px;
}

td {
    padding: 0 0 1px;
    border-right: 1px solid #000;
    border-bottom: 1px solid #000;
    background: #e0e0e0;
    text-align: center;
    white-space: nowrap;
}

.faint td {
    border-color: #f0f0f0;
}

td.open,
.faint td.open {
    border-right-color: transparent;
    border-bottom: none;
}

td.title {
    padding-bottom: 6px;
    font-family: "Liberation Mono", "Noto Sans CJK SC", sans-serif;
    font-size: 22px;
    line-height: 24px;
}

/* Full-width maths signs */
.sign {
    font-family: "Noto Sans CJK SC", sans-serif;
}

.white,
.grid td {
    background: #fff;
}

.faint td.under {
    border-bottom-color: #000;
}

.fill {
    background: #f0c9a5;
}

.grid td.label {
    background: #e0e0e0;
}

.grid td.soft {
    border-bottom-color: #f0f0f0;
}

.grid td.tail {
    padding-right: 2px;
    border-right-color: #f0f0f0;
    text-align: right;
}

.grid td.head {
    padding-left: 3px;
    text-align: left;
}

.grid td.blank,
td.pale {
    border-right-color: #f0f0f0;
}

td.number {
    padding-right: 3px;
    text-align: right;
}

.top {
    border-right: none;
    border-bottom-width: 2px;
}

td.gutter {
    border-bottom: none;
}

td.left {
    border-right-width: 2px;
}

td.right {
    border-right: none;
    border-left: 1px solid #000;
}

td.bottom {
    border-top: 1px solid #000;
    border-right: none;
    border-bottom: none;
}

td.text {
    padding-left: 2px;
    text-align: left;
}

.date span {
    margin: 0 7px;
}

/* Blue highlight drawn over the row text */
.mark {
    position: relative;
}

.mark::after {
    content: "";
    position: absolute;
    inset: -9px -1px -8px -8px;
    border: 6px solid #00f;
}

.w5 { width: 5px; }
.w6 { width: 6px; }
.w10 { width: 10px; }
.w16 { width: 16px; }
.w17 { width: 17px; }
.w18 { width: 18px; }
.w19 { width: 19px; }
.w20 { width: 20px; }
.w23 { width: 23px; }
.w25 { width: 25px; }
.w27 { width: 27px; }
.w28 { width: 28px; }
.w33 { width: 33px; }
.w38 { width: 38px; }

.h5 { height: 5px; }
.h18 { height: 18px; }
.h19 { height: 19px; }
.h20 { height: 20px; }
.h24 { height: 24px; }
.h27 { height: 27px; }
.h30 { height: 30px; }
.h32 { height: 32px; }
.h33 { height: 33px; }
.h34 { height: 34px; }
.h35 { height: 35px; }
.h36 { height: 36px; }
.h40 { height: 40px; }

/* Sheet tabs */
.sheet-tabs {
    flex: none;
    display: flex;
    height: 18px;
    border-bottom: 1px solid #6a6a6a;
    border-left: 1px solid #6a6a6a;
}

.sheet-tabs button {
    width: 17px;
    border: 1px solid #aaa;
    border-left-color: #fff;
}

.sheet-tabs button svg {
    width: 8px;
    height: 8px;
}

.page {
    position: relative;
    width: 58px;
    margin-left: 1px;
    line-height: 16px;
    text-align: center;
}

.page svg {
    display: block;
    width: 58px;
    height: 17px;
}

.page span {
    position: absolute;
    inset: 0;
}

.rest {
    flex: 1;
    border-top: 1px solid #9a9a9a;
}

/* Status bar */
.status {
    flex: none;
    display: flex;
    align-items: center;
    height: 23px;
    padding: 3px 0 0 3px;
}

.status a {
    margin: 0 10px 0 4px;
    color: #00f;
    font-family: "Liberation Mono", monospace;
    font-size: 10px;
}
```
